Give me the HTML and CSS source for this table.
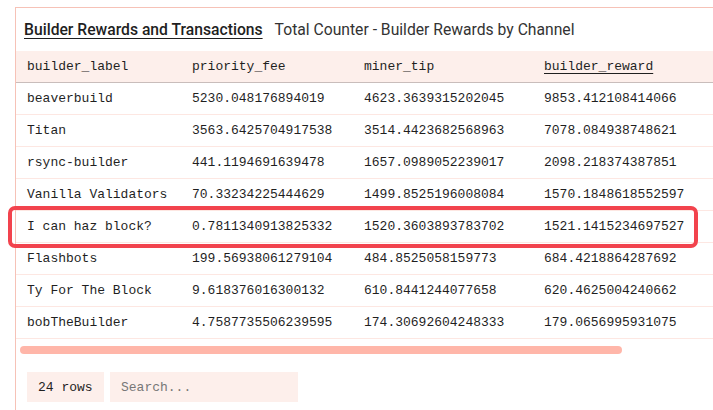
FILE: index.html
```html
<!DOCTYPE html>
<html>
<head>
<meta charset="utf-8">
<link rel="stylesheet" href="styles.css">
</head>
<body>
<div class="card">
  <div class="title-row">
    <span class="title">Builder Rewards and Transactions</span>
    <span class="subtitle">Total Counter - Builder Rewards by Channel</span>
  </div>
  <div class="table-wrap">
    <table class="grid">
      <colgroup>
        <col class="c1"><col class="c2"><col class="c3"><col class="c4">
      </colgroup>
      <thead>
        <tr><th>builder_label</th><th>priority_fee</th><th>miner_tip</th><th><span class="sorted">builder_reward</span></th></tr>
      </thead>
      <tbody>
        <tr><td>beaverbuild</td><td>5230.048176894019</td><td>4623.3639315202045</td><td>9853.412108414066</td></tr>
        <tr><td>Titan</td><td>3563.6425704917538</td><td>3514.4423682568963</td><td>7078.084938748621</td></tr>
        <tr><td>rsync-builder</td><td>441.1194691639478</td><td>1657.0989052239017</td><td>2098.218374387851</td></tr>
        <tr><td>Vanilla Validators</td><td>70.33234225444629</td><td>1499.8525196008084</td><td>1570.1848618552597</td></tr>
        <tr><td>I can haz block?</td><td>0.7811340913825332</td><td>1520.3603893783702</td><td>1521.1415234697527</td></tr>
        <tr><td>Flashbots</td><td>199.56938061279104</td><td>484.8525058159773</td><td>684.4218864287692</td></tr>
        <tr><td>Ty For The Block</td><td>9.618376016300132</td><td>610.8441244077658</td><td>620.4625004240662</td></tr>
        <tr><td>bobTheBuilder</td><td>4.7587735506239595</td><td>174.30692604248333</td><td>179.0656995931075</td></tr>
      </tbody>
    </table>
  </div>
  <div class="scrollbar"></div>
  <div class="footer">
    <div class="count">24 rows</div>
    <div class="search">Search...</div>
  </div>
</div>
<div class="highlight"></div>
</body>
</html>
```
FILE: styles.css
```css
html, body {
  margin: 0;
  padding: 0;
  background: #ffffff;
  overflow: hidden;
}
body {
  width: 713px;
  height: 410px;
  position: relative;
  font-family: "Liberation Mono", monospace;
  color: #1f1f1f;
}
.card {
  margin: 7px 0 0 15px;
  width: 720px;
  height: 420px;
  border-top: 1px solid #f6c2b7;
  border-left: 1px solid #f6c2b7;
}
.title-row {
  height: 43px;
  padding-left: 8px;
  display: flex;
  align-items: center;
  gap: 12px;
  font-family: Roboto, "Liberation Sans", sans-serif;
  font-size: 15.7px;
  color: #1f1f1f;
}
.title {
  font-weight: 500;
  text-decoration: underline;
  text-underline-offset: 3px;
}
.subtitle {
  color: #333;
}
.table-wrap {
  overflow: hidden;
}
.grid {
  border-collapse: collapse;
  table-layout: fixed;
  width: 707px;
  font-size: 13px;
}
.c1 { width: 165px; }
.c2 { width: 172px; }
.c3 { width: 180px; }
.c4 { width: 190px; }
.grid th, .grid td {
  padding: 0 0 0 11px;
  text-align: left;
  white-space: nowrap;
  height: 31px;
  font-weight: normal;
}
.grid thead tr {
  background: #fdefeb;
  border-bottom: 1px solid #c9bdbb;
}
.grid tbody tr {
  border-bottom: 1px solid #fde7e2;
}
.sorted {
  text-decoration: underline;
  text-underline-offset: 3px;
}
.scrollbar {
  margin: 7px 0 0 4px;
  width: 602px;
  height: 8px;
  border-radius: 4px;
  background: #ffb6a9;
}
.footer {
  display: flex;
  gap: 6px;
  margin-top: 18px;
  padding-left: 11px;
  font-size: 13px;
}
.count, .search {
  height: 30px;
  display: flex;
  align-items: center;
  background: #fdefeb;
  padding-left: 11px;
}
.count {
  width: 66px;
}
.search {
  width: 177px;
  color: #777;
}
.highlight {
  position: absolute;
  left: 8px;
  top: 206px;
  width: 682px;
  height: 34px;
  border: 4px solid #f2434d;
  border-radius: 7px;
}
```
